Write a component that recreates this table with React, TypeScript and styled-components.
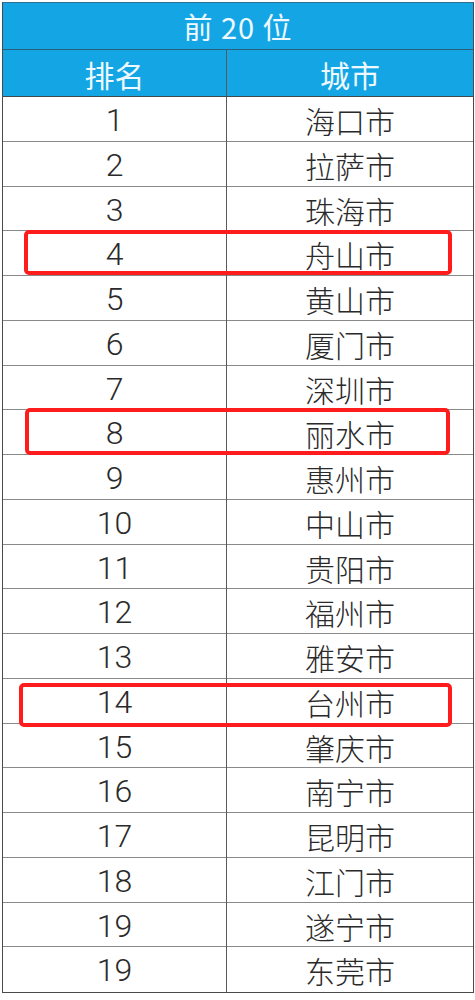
import React from 'react';
import styled, { createGlobalStyle } from 'styled-components';

const GlobalStyle = createGlobalStyle`
  html, body {
    margin: 0;
    padding: 0;
    background: #ffffff;
  }
  body {
    font-family: "Noto Sans CJK SC", "Liberation Sans", sans-serif;
  }
`;

const Page = styled.div`
  position: relative;
  width: 475px;
  height: 1000px;
  padding: 2px 1px 0 2px;
  box-sizing: border-box;
`;

const Table = styled.div`
  width: 472px;
  border: 1px solid #4a4a4a;
  border-top-color: #2f6f8f;
  box-sizing: border-box;
`;

const TitleBar = styled.div`
  height: 46px;
  display: flex;
  align-items: center;
  justify-content: center;
  background: #14a6e4;
  color: #eef8ff;
  font-size: 29px;
  letter-spacing: 1px;
  border-bottom: 1px solid #2b5f7a;
`;

const Row = styled.div<{ $head?: boolean }>`
  display: grid;
  grid-template-columns: 224px 1fr;
  height: ${p => (p.$head ? '47px' : '44.75px')};
  box-sizing: border-box;
  background: ${p => (p.$head ? '#14a6e4' : '#ffffff')};
  color: ${p => (p.$head ? '#eef8ff' : '#2a2a2a')};
  border-bottom: 1px solid ${p => (p.$head ? '#3d4a52' : '#8a8a8a')};
  &:last-child {
    border-bottom: none;
  }
`;

const Cell = styled.div<{ $num?: boolean; $head?: boolean }>`
  display: flex;
  align-items: center;
  justify-content: center;
  font-size: ${p => (p.$num ? '32px' : '30px')};
  font-family: ${p =>
    p.$num
      ? 'Roboto, "Liberation Sans", sans-serif'
      : '"Noto Sans CJK SC", sans-serif'};
  font-weight: ${p => (p.$head ? 400 : 300)};
  padding-top: 1px;
  &:first-child {
    border-right: 1px solid #5a5a5a;
  }
`;

const Highlight = styled.div`
  position: absolute;
  box-sizing: border-box;
  border: 4px solid #ff1c1c;
  border-radius: 5px;
  pointer-events: none;
`;

const rows: [string, string][] = [
  ['1', '海口市'],
  ['2', '拉萨市'],
  ['3', '珠海市'],
  ['4', '舟山市'],
  ['5', '黄山市'],
  ['6', '厦门市'],
  ['7', '深圳市'],
  ['8', '丽水市'],
  ['9', '惠州市'],
  ['10', '中山市'],
  ['11', '贵阳市'],
  ['12', '福州市'],
  ['13', '雅安市'],
  ['14', '台州市'],
  ['15', '肇庆市'],
  ['16', '南宁市'],
  ['17', '昆明市'],
  ['18', '江门市'],
  ['19', '遂宁市'],
  ['19', '东莞市'],
];

const boxes = [
  { top: 230, left: 24, width: 428, height: 45 },
  { top: 408, left: 25, width: 425, height: 47 },
  { top: 683, left: 19, width: 433, height: 44 },
];

const App: React.FC = () => (
  <>
    <GlobalStyle />
    <Page>
      <Table>
        <TitleBar>前 20 位</TitleBar>
        <Row $head>
          <Cell $head>排名</Cell>
          <Cell $head>城市</Cell>
        </Row>
        {rows.map(([rank, city], i) => (
          <Row key={i}>
            <Cell $num>{rank}</Cell>
            <Cell>{city}</Cell>
          </Row>
        ))}
      </Table>
      {boxes.map((b, i) => (
        <Highlight key={i} style={b} />
      ))}
    </Page>
  </>
);

export default App;
